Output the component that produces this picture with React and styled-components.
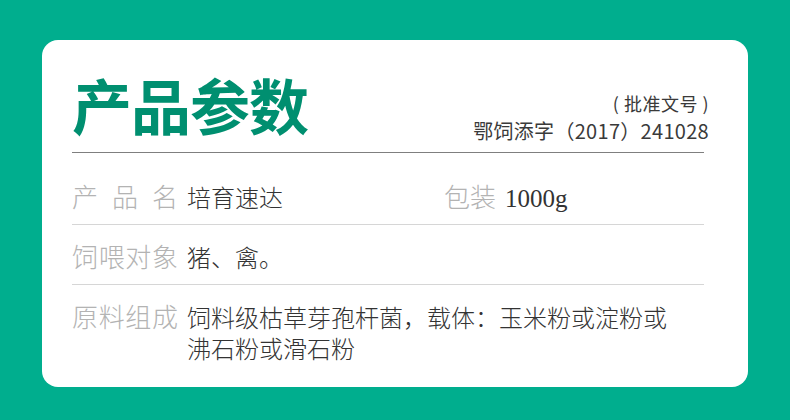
import React from "react";
import styled, { createGlobalStyle } from "styled-components";

const Global = createGlobalStyle`
  html, body { margin: 0; padding: 0; }
  body {
    width: 790px;
    height: 420px;
    background: #00ae8e;
    font-family: "Noto Sans CJK SC", "Noto Sans", sans-serif;
    overflow: hidden;
  }
`;

const Page = styled.div`
  padding: 40px 42px 0 42px;
`;

const Card = styled.section`
  box-sizing: border-box;
  width: 706px;
  height: 347px;
  background: #ffffff;
  border-radius: 16px;
  padding: 0 44px 0 30px;
`;

const Header = styled.header`
  display: flex;
  justify-content: space-between;
  align-items: flex-end;
  padding: 34px 0 8px;
  border-bottom: 1px solid #7f7f7f;
`;

const Title = styled.h1`
  margin: 0 0 10px;
  font-size: 60px;
  line-height: 60px;
  font-weight: 700;
  color: #008f70;
  letter-spacing: -1px;
`;

const Approval = styled.div`
  margin-right: -5px;
  text-align: right;
  color: #3a3a3a;
`;

const ApprovalLine = styled.div`
  font-size: ${(p) => (p.$big ? "20px" : "18px")};
  letter-spacing: ${(p) => (p.$big ? "0.3px" : "0.5px")};
  line-height: 27px;
`;

const Rows = styled.div`
  padding-top: 12px;
`;

const Row = styled.div`
  display: grid;
  grid-template-columns: ${(p) => (p.$split ? "372px 1fr" : "1fr")};
  padding: 15px 0 12px;
  border-bottom: ${(p) => (p.$last ? "none" : "1px solid #d6d6d6")};
`;

const Field = styled.div`
  display: flex;
  align-items: baseline;
`;

const Label = styled.span`
  flex: none;
  width: ${(p) => (p.$auto ? "auto" : "106px")};
  margin-right: 9px;
  font-size: 26px;
  line-height: 31px;
  font-weight: 300;
  color: #b3b3b3;
  text-align: justify;
  text-align-last: justify;
  white-space: nowrap;
`;

const Value = styled.span`
  font-size: 24px;
  line-height: 31px;
  font-weight: 300;
  color: #333333;
`;

const Latin = styled.span`
  font-family: "Liberation Serif", serif;
  font-size: 25px;
  line-height: 1;
`;

export default function App() {
  return (
    <>
      <Global />
      <Page>
        <Card>
          <Header>
            <Title>产品参数</Title>
            <Approval>
              <ApprovalLine>( 批准文号 )</ApprovalLine>
              <ApprovalLine $big>鄂饲添字（2017）241028</ApprovalLine>
            </Approval>
          </Header>
          <Rows>
            <Row $split>
              <Field>
                <Label>产 品 名</Label>
                <Value>培育速达</Value>
              </Field>
              <Field>
                <Label $auto>包装</Label>
                <Value>
                  <Latin>1000g</Latin>
                </Value>
              </Field>
            </Row>
            <Row>
              <Field>
                <Label>饲喂对象</Label>
                <Value>猪、禽。</Value>
              </Field>
            </Row>
            <Row $last>
              <Field>
                <Label>原料组成</Label>
                <Value>
                  饲料级枯草芽孢杆菌，载体：玉米粉或淀粉或
                  <br />
                  沸石粉或滑石粉
                </Value>
              </Field>
            </Row>
          </Rows>
        </Card>
      </Page>
    </>
  );
}
